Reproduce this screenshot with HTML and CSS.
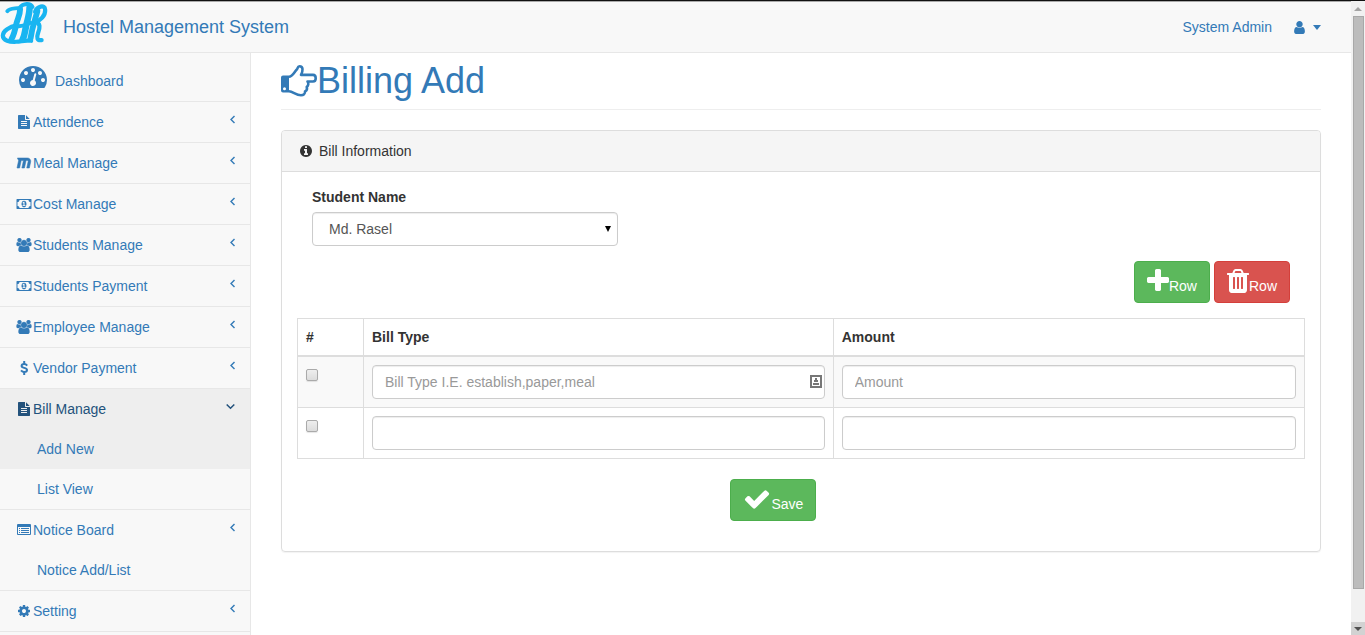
FILE: index.html
```html
<!DOCTYPE html>
<html lang="en">
<head>
<meta charset="utf-8">
<meta name="viewport" content="width=device-width, initial-scale=1">
<title>Hostel Management System</title>
<link rel="stylesheet" href="styles.css">
</head>
<body>
<svg class="sprite" aria-hidden="true">
  <symbol id="i-file" viewBox="0 0 1792 1792"><path d="M1596 476q14 14 28 36h-472v-472q22 14 36 28zm-476 164h544v1056q0 40-28 68t-68 28h-1344q-40 0-68-28t-28-68v-1600q0-40 28-68t68-28h800v544q0 40 28 68t68 28zm160 736v-64q0-14-9-23t-23-9h-704q-14 0-23 9t-9 23v64q0 14 9 23t23 9h704q14 0 23-9t9-23zm0-256v-64q0-14-9-23t-23-9h-704q-14 0-23 9t-9 23v64q0 14 9 23t23 9h704q14 0 23-9t9-23zm0-256v-64q0-14-9-23t-23-9h-704q-14 0-23 9t-9 23v64q0 14 9 23t23 9h704q14 0 23-9t9-23z"/></symbol>
  <symbol id="i-dash" viewBox="0 0 1792 1792"><path d="M384 1152q0-53-37.5-90.5t-90.5-37.5-90.5 37.5-37.5 90.5 37.5 90.5 90.5 37.5 90.5-37.5 37.5-90.5zm192-448q0-53-37.5-90.5t-90.5-37.5-90.5 37.5-37.5 90.5 37.5 90.5 90.5 37.5 90.5-37.5 37.5-90.5zm428 481l101-382q6-26-7.5-48.5t-38.5-29.5-48 6.5-30 39.5l-101 382q-60 5-107 43.5t-63 98.5q-20 77 20 146t117 89 146-20 89-117q16-60-6-117t-72-91zm660-33q0-53-37.5-90.5t-90.5-37.5-90.5 37.5-37.5 90.5 37.5 90.5 90.5 37.5 90.5-37.5 37.5-90.5zm-640-640q0-53-37.5-90.5t-90.5-37.5-90.5 37.5-37.5 90.5 37.5 90.5 90.5 37.5 90.5-37.5 37.5-90.5zm448 192q0-53-37.5-90.5t-90.5-37.5-90.5 37.5-37.5 90.5 37.5 90.5 90.5 37.5 90.5-37.5 37.5-90.5zm320 448q0 261-141 483-19 29-54 29h-1402q-35 0-54-29-141-221-141-483 0-182 71-348t191-286 286-191 348-71 348 71 286 191 191 286 71 348z"/></symbol>
  <symbol id="i-meal" viewBox="0 0 1792 1792"><path stroke="currentColor" stroke-width="70" d="M1745 773l-164 763h-334l178-832q13-56-15-88-27-33-83-33h-169l-204 953h-334l204-953h-286l-204 953h-334l204-953-153-327h1276q101 0 189.5 40.5t147.5 113.5q60 73 81 168.5t0 194.5z"/></symbol>
  <symbol id="i-money" viewBox="0 0 1920 1792"><path d="M768 1152h384v-96h-128v-448h-114l-148 137 77 80q42-37 55-57h2v288h-128v96zm512-256q0 70-21 142t-59.5 134-101.5 101-138 39-138-39-101.5-101-59.5-134-21-142 21-142 59.5-134 101.5-101 138-39 138 39 101.5 101 59.5 134 21 142zm512 256v-512q-106 0-181-75t-75-181h-1152q0 106-75 181t-181 75v512q106 0 181 75t75 181h1152q0-106 75-181t181-75zm128-832v1152q0 26-19 45t-45 19h-1792q-26 0-45-19t-19-45v-1152q0-26 19-45t45-19h1792q26 0 45 19t19 45z"/></symbol>
  <symbol id="i-users" viewBox="0 0 1920 1792"><path stroke="currentColor" stroke-width="40" d="M593 896q-162 5-265 128h-134q-82 0-138-40.5t-56-118.5q0-353 124-353 6 0 43.5 21t97.5 42.5 119 21.5q67 0 133-23-5 37-5 66 0 139 81 256zm1071 637q0 120-73 189.5t-194 69.5h-874q-121 0-194-69.5t-73-189.5q0-53 3.5-103.5t14-109 26.5-108.5 43-97.5 62-81 85.5-53.5 111.5-20q10 0 43 21.5t73 48 107 48 135 21.5 135-21.5 107-48 73-48 43-21.5q61 0 111.5 20t85.5 53.5 62 81 43 97.5 26.5 108.5 14 109 3.5 103.5zm-1024-1277q0 106-75 181t-181 75-181-75-75-181 75-181 181-75 181 75 75 181zm704 384q0 159-112.5 271.5t-271.5 112.5-271.5-112.5-112.5-271.5 112.5-271.5 271.5-112.5 271.5 112.5 112.5 271.5zm576 225q0 78-56 118.5t-138 40.5h-134q-103-123-265-128 81-117 81-256 0-29-5-66 66 23 133 23 59 0 119-21.5t97.5-42.5 43.5-21q124 0 124 353zm-128-609q0 106-75 181t-181 75-181-75-75-181 75-181 181-75 181 75 75 181z"/></symbol>
  <symbol id="i-usd" viewBox="0 0 14 14"><path d="M10.200 4.600C9.400 3.600 8.300 3.100 7.200 3.100 5.600 3.100 4.600 3.900 4.600 5 4.600 7.500 10 6.300 10 9 10 10.200 8.900 10.900 7.400 10.900 6 10.900 4.900 10.300 4 9.300M7.200 0V3.200M7.200 10.900V14" fill="none" stroke="currentColor" stroke-width="2"/></symbol>
  <symbol id="i-list" viewBox="0 0 14 14"><path fill-rule="evenodd" d="M1 1h12a1 1 0 0 1 1 1v9a1 1 0 0 1-1 1H1a1 1 0 0 1-1-1V2a1 1 0 0 1 1-1zM1 4v7h12V4z"/><path d="M2 5h1v1H2zM4 5h8v1H4zM2 7h1v1H2zM4 7h8v1H4zM2 9h1v1H2zM4 9h8v1H4z"/></symbol>
  <symbol id="i-cog" viewBox="0 0 1792 1792"><path d="M1152 896q0-106-75-181t-181-75-181 75-75 181 75 181 181 75 181-75 75-181zm512-109v222q0 12-8 23t-20 13l-185 28q-19 54-39 91 35 50 107 138 10 12 10 25t-9 23q-27 37-99 108t-94 71q-12 0-26-9l-138-108q-44 23-91 38-16 136-29 186-7 28-36 28h-222q-14 0-24.500-8.500t-11.500-21.500l-28-184q-49-16-90-37l-141 107q-10 9-25 9-14 0-25-11-126-114-165-168-7-10-7-23 0-12 8-23 15-21 51-66.500t54-70.500q-27-50-41-99l-183-27q-13-2-21-12.500t-8-23.500v-222q0-12 8-23t19-13l186-28q14-46 39-92-40-57-107-138-10-12-10-24 0-10 9-23 26-36 98.500-107.500t94.500-71.500q13 0 26 10l138 107q44-23 91-38 16-136 29-186 7-28 36-28h222q14 0 24.500 8.500t11.500 21.500l28 184q49 16 90 37l142-107q9-9 24-9 13 0 25 10 129 119 165 170 7 8 7 22 0 12-8 23-15 21-51 66.500t-54 70.500q26 50 41 98l183 28q13 2 21 12.500t8 23.500z"/></symbol>
  <symbol id="i-left" viewBox="0 0 5 14"><path d="M4.500 3.900 1 7.500l3.500 3.600" fill="none" stroke="currentColor" stroke-width="1.400"/></symbol>
  <symbol id="i-down" viewBox="0 0 9 14"><path d="M.7 5.500l3.800 3.800 3.800-3.800" fill="none" stroke="currentColor" stroke-width="1.500"/></symbol>
  <symbol id="i-user" viewBox="192 0 1408 1792"><path d="M1536 1399q0 109-62.500 187t-150.500 78h-854q-88 0-150.500-78t-62.500-187q0-85 8.500-160.500t31.500-152 58.500-131 94-89 134.500-34.500q131 128 313 128t313-128q76 0 134.500 34.500t94 89 58.500 131 31.500 152 8.500 160.500zm-256-887q0 159-112.500 271.500t-271.500 112.500-271.500-112.500-112.500-271.500 112.500-271.500 271.500-112.500 271.500 112.500 112.500 271.500z"/></symbol>
  <symbol id="i-info" viewBox="128 0 1536 1792"><path d="M1152 1376v-160q0-14-9-23t-23-9h-96v-512q0-14-9-23t-23-9h-320q-14 0-23 9t-9 23v160q0 14 9 23t23 9h96v320h-96q-14 0-23 9t-9 23v160q0 14 9 23t23 9h448q14 0 23-9t9-23zm-128-896v-160q0-14-9-23t-23-9h-192q-14 0-23 9t-9 23v160q0 14 9 23t23 9h192q14 0 23-9t9-23zm640 416q0 209-103 385.500t-279.500 279.500-385.500 103-385.500-103-279.500-279.500-103-385.500 103-385.500 279.500-279.500 385.500-103 385.500 103 279.500 279.500 103 385.500z"/></symbol>
  <symbol id="i-plus" viewBox="192 64 1408 1792"><path d="M1600 736v192q0 40-28 68t-68 28h-416v416q0 40-28 68t-68 28h-192q-40 0-68-28t-28-68v-416h-416q-40 0-68-28t-28-68v-192q0-40 28-68t68-28h416v-416q0-40 28-68t68-28h192q40 0 68 28t28 68v416h416q40 0 68 28t28 68z"/></symbol>
  <symbol id="i-trash" viewBox="192 64 1408 1792"><path d="M704 1376v-704q0-14-9-23t-23-9h-64q-14 0-23 9t-9 23v704q0 14 9 23t23 9h64q14 0 23-9t9-23zm256 0v-704q0-14-9-23t-23-9h-64q-14 0-23 9t-9 23v704q0 14 9 23t23 9h64q14 0 23-9t9-23zm256 0v-704q0-14-9-23t-23-9h-64q-14 0-23 9t-9 23v704q0 14 9 23t23 9h64q14 0 23-9t9-23zm-544-992h448l-48-117q-7-9-17-11h-317q-10 2-17 11zm928 32v64q0 14-9 23t-23 9h-96v948q0 83-47 143.500t-113 60.500h-832q-66 0-113-58.500t-47-141.500v-952h-96q-14 0-23-9t-9-23v-64q0-14 9-23t23-9h309l70-167q15-37 54-63t79-26h320q40 0 79 26t54 63l70 167h309q14 0 23 9t9 23z"/></symbol>
  <symbol id="i-check" viewBox="0 64 1792 1792"><path d="M1671 566q0 40-28 68l-724 724-136 136q-28 28-68 28t-68-28l-136-136-362-362q-28-28-28-68t28-68l136-136q28-28 68-28t68 28l294 295 656-657q28-28 68-28t68 28l136 136q28 28 28 68z"/></symbol>
</svg>

<div class="window">
  <div class="page">
    <header class="topbar">
      <a class="brand" href="#">
        <svg class="logo" viewBox="0 0 144 132" aria-hidden="true"><g fill="none" stroke="#19b5f1" stroke-linecap="round" stroke-linejoin="round">
          <path stroke-width="12" d="M21 28C28 18 42 21 58 18C70 3 92 3 98 15"/>
          <path stroke-width="18" d="M60 22C60 40 53 50 49 65C45 85 42 100 34 113"/>
          <path stroke-width="13" d="M50 72C28 76 7 88 7 103C7 119 28 123 48 122C66 121 72 116 94 119"/>
          <path stroke-width="20" d="M89 18C89 40 82 55 78 76C74 94 74 104 68 114"/>
          <path stroke-width="12" d="M50 74C64 76 76 72 92 64"/>
          <path stroke-width="18" d="M113 28C108 50 98 70 92 112"/>
          <path stroke-width="13" d="M106 30C112 14 136 6 137 24C138 42 122 58 106 62C124 64 121 80 115 96C110 110 112 119 126 117"/>
        </g></svg>
        <span>Hostel Management System</span>
      </a>
      <nav class="account" aria-label="Account">
        <a href="#">System Admin</a>
        <a class="account-menu" href="#" aria-label="Account menu"><svg class="user-icon"><use href="#i-user"/></svg><span class="caret"></span></a>
      </nav>
    </header>

    <div class="columns">
      <nav class="sidebar" aria-label="Main">
        <ul class="menu">
          <li><a class="item item-dash" href="#"><svg class="icon-dash"><use href="#i-dash"/></svg><span>Dashboard</span></a></li>
          <li><a class="item" href="#"><svg class="icon"><use href="#i-file"/></svg><span class="name">Attendence</span><svg class="left"><use href="#i-left"/></svg></a></li>
          <li><a class="item" href="#"><svg class="icon"><use href="#i-meal"/></svg><span class="name">Meal Manage</span><svg class="left"><use href="#i-left"/></svg></a></li>
          <li><a class="item" href="#"><svg class="icon"><use href="#i-money"/></svg><span class="name">Cost Manage</span><svg class="left"><use href="#i-left"/></svg></a></li>
          <li><a class="item" href="#"><svg class="icon"><use href="#i-users"/></svg><span class="name">Students Manage</span><svg class="left"><use href="#i-left"/></svg></a></li>
          <li><a class="item" href="#"><svg class="icon"><use href="#i-money"/></svg><span class="name">Students Payment</span><svg class="left"><use href="#i-left"/></svg></a></li>
          <li><a class="item" href="#"><svg class="icon"><use href="#i-users"/></svg><span class="name">Employee Manage</span><svg class="left"><use href="#i-left"/></svg></a></li>
          <li><a class="item" href="#"><svg class="icon"><use href="#i-usd"/></svg><span class="name">Vendor Payment</span><svg class="left"><use href="#i-left"/></svg></a></li>
          <li>
            <a class="item open" href="#"><svg class="icon"><use href="#i-file"/></svg><span class="name">Bill Manage</span><svg class="down"><use href="#i-down"/></svg></a>
            <ul class="submenu">
              <li><a class="active" href="#">Add New</a></li>
              <li><a href="#">List View</a></li>
            </ul>
          </li>
          <li>
            <a class="item" href="#"><svg class="icon"><use href="#i-list"/></svg><span class="name">Notice Board</span><svg class="left"><use href="#i-left"/></svg></a>
            <ul class="submenu">
              <li><a href="#">Notice Add/List</a></li>
            </ul>
          </li>
          <li><a class="item" href="#"><svg class="icon"><use href="#i-cog"/></svg><span class="name">Setting</span><svg class="left"><use href="#i-left"/></svg></a></li>
        </ul>
      </nav>

      <main class="content">
        <h1 class="title">
          <svg class="hand" viewBox="0 0 36 36" aria-hidden="true"><path fill="currentColor" fill-rule="evenodd" d="M2 12.500h6v17H2a2 2 0 0 1-2-2v-13a2 2 0 0 1 2-2zM3.500 24.200a1.500 1.500 0 1 0 0 3 1.500 1.500 0 0 0 0-3z"/><path fill="none" stroke="currentColor" stroke-width="2.600" stroke-linejoin="round" d="M8 13.700C11.500 13.700 13.500 8.500 16 6.200C16.800 5.300 16.500 3.300 18.500 3.300C22.500 3.300 22 8 20 11.900H32C35.600 11.900 35.600 18.500 32 18.500H26.500C28 20.500 27.300 23 25.700 23.800C26.500 26 25.500 27.800 24 28.500C24.300 31 22.500 32.200 20 32.200C15 32.200 12 28.500 8 28.300"/></svg>Billing Add
        </h1>

        <section class="panel">
          <h2 class="panel-head"><svg class="info-icon"><use href="#i-info"/></svg>Bill Information</h2>
          <form class="panel-body">
            <div class="field">
              <label for="student">Student Name</label>
              <div class="select-wrap">
                <select id="student" class="control select"><option>Md. Rasel</option></select>
              </div>
            </div>
            <div class="row-actions">
              <button class="btn btn-green" type="button"><svg class="btn-icon"><use href="#i-plus"/></svg>Row</button>
              <button class="btn btn-red" type="button"><svg class="btn-icon"><use href="#i-trash"/></svg>Row</button>
            </div>
            <table class="bills">
              <thead>
                <tr><th class="pick" scope="col">#</th><th scope="col">Bill Type</th><th class="amount" scope="col">Amount</th></tr>
              </thead>
              <tbody>
                <tr>
                  <td><input class="check" type="checkbox" aria-label="Select row 1"></td>
                  <td><div class="input-wrap"><input class="control" type="text" placeholder="Bill Type I.E. establish,paper,meal" aria-label="Bill type, row 1"><svg class="autofill" viewBox="0 0 12 14" aria-hidden="true"><path fill="none" stroke="#777" stroke-width="2" d="M1 1h10v11H1z"/><path fill="#777" d="M5 3h2v2h1v2H4V5h1zM3 8h6v2H3z"/></svg></div></td>
                  <td><input class="control" type="text" placeholder="Amount" aria-label="Amount, row 1"></td>
                </tr>
                <tr>
                  <td><input class="check" type="checkbox" aria-label="Select row 2"></td>
                  <td><input class="control" type="text" aria-label="Bill type, row 2"></td>
                  <td><input class="control" type="text" aria-label="Amount, row 2"></td>
                </tr>
              </tbody>
            </table>
            <div class="save">
              <button class="btn btn-green" type="button"><svg class="btn-icon btn-icon-wide"><use href="#i-check"/></svg>Save</button>
            </div>
          </form>
        </section>
      </main>
    </div>
  </div>

  <div class="scrollbar" aria-hidden="true">
    <div class="scroll-up"></div>
    <div class="scroll-track"><div class="scroll-thumb"></div></div>
    <div class="scroll-down"></div>
  </div>
</div>
</body>
</html>
```
FILE: styles.css
```css
* { box-sizing: border-box; }

body {
  margin: 0;
  font-family: "Liberation Sans", Arial, sans-serif;
  font-size: 14px;
  line-height: 20px;
  color: #333;
  background: #fff;
}

a { color: #337ab7; text-decoration: none; }
ul { list-style: none; margin: 0; padding: 0; }
svg { display: block; flex: none; fill: currentColor; }
button, input, select { font: inherit; }

.sprite { display: none; }

.window {
  display: flex;
  height: 100vh;
  overflow: hidden;
  border-top: 1px solid #111;
  box-shadow: inset 0 1px 0 #aaa;
}

.page {
  flex: 1;
  min-width: 0;
  display: flex;
  flex-direction: column;
  padding-top: 1px;
}

/* Top bar */
.topbar {
  display: flex;
  justify-content: space-between;
  min-height: 51px;
  padding-right: 30px;
  background: #f8f8f8;
  border-bottom: 1px solid #e7e7e7;
}

.brand {
  display: flex;
  align-items: flex-start;
  gap: 15px;
  font-size: 18px;
}

.brand span { padding: 15px 0; }
.logo { width: 48px; height: 43px; }

.account {
  display: flex;
  align-items: center;
  gap: 21px;
}

.account-menu {
  display: flex;
  align-items: center;
  gap: 7px;
}

.user-icon { width: 13px; height: 15px; }

.caret {
  border: 4px solid transparent;
  border-top: 5px solid currentColor;
  border-bottom: 0;
}

/* Sidebar */
.columns { display: flex; flex: 1; min-height: 0; }

.sidebar {
  flex: none;
  width: 251px;
  overflow: hidden;
  background: #f8f8f8;
  border-right: 1px solid #e7e7e7;
}

.menu > li { border-bottom: 1px solid #e7e7e7; }

.item {
  display: flex;
  align-items: flex-start;
  padding: 10px 15px;
}

.item-dash { gap: 4px; padding-top: 9px; }
.item-dash span { padding-top: 9px; }
.icon-dash { width: 36px; height: 28px; }
.icon { width: 18px; height: 14px; margin-top: 3px; }
.name { flex: 1; }
.left { width: 5px; height: 14px; }
.down { width: 9px; height: 14px; }
.open { color: #23527c; }
.open, .submenu .active { background: #eee; }
.submenu a { display: block; padding: 10px 15px 10px 37px; }

/* Content */
.content { flex: 1; min-width: 0; padding: 0 30px; }

.title {
  display: flex;
  align-items: center;
  margin: 8px 0 20px;
  padding-bottom: 8px;
  border-bottom: 1px solid #eee;
  font-size: 36px;
  font-weight: 400;
  line-height: 40px;
  color: #337ab7;
}

.hand { width: 36px; height: 36px; }

.panel {
  border: 1px solid #ddd;
  border-radius: 4px;
  box-shadow: 0 1px 1px rgba(0, 0, 0, .05);
}

.panel-head {
  display: flex;
  align-items: center;
  gap: 7px;
  margin: 0;
  padding: 10px 18px;
  font-size: 14px;
  font-weight: 400;
  background: #f5f5f5;
  border-bottom: 1px solid #ddd;
  border-radius: 3px 3px 0 0;
}

.info-icon { width: 12px; height: 14px; }
.panel-body { padding: 15px 15px 30px; }
.field { width: 33.333%; padding: 0 15px; }
.field label { display: block; margin-bottom: 5px; font-weight: 700; }
.select-wrap, .input-wrap { position: relative; }

.select-wrap::after {
  content: "";
  position: absolute;
  top: 14px;
  right: 7px;
  border: 3px solid transparent;
  border-top: 6px solid #000;
  border-bottom: 0;
  pointer-events: none;
}

.control {
  display: block;
  width: 100%;
  height: 34px;
  padding: 6px 12px;
  color: #555;
  background: #fff;
  border: 1px solid #ccc;
  border-radius: 4px;
  box-shadow: inset 0 1px 1px rgba(0, 0, 0, .075);
}

.control::placeholder { color: #999; opacity: 1; }
.select { appearance: none; padding-left: 16px; }

.autofill {
  position: absolute;
  top: 10px;
  right: 3px;
  width: 12px;
  height: 14px;
}

.row-actions {
  display: flex;
  justify-content: flex-end;
  gap: 4px;
  padding: 15px;
}

.btn {
  display: flex;
  align-items: flex-end;
  padding: 6px 12px;
  color: #fff;
  border: 1px solid;
  border-radius: 4px;
}

.btn-green { background: #5cb85c; border-color: #4cae4c; }
.btn-red { background: #d9534f; border-color: #d43f3a; }
.btn-icon { width: 22px; height: 28px; }
.btn-icon-wide { width: 28px; }

.bills {
  width: 100%;
  table-layout: fixed;
  border-collapse: collapse;
}

.bills th, .bills td {
  padding: 8px;
  border: 1px solid #ddd;
  text-align: left;
  vertical-align: top;
}

.bills th { border-bottom-width: 2px; }
.bills .pick { width: 66px; }
.bills .amount { width: 46.8%; }
.bills tbody tr:nth-child(odd) { background: #f9f9f9; }

.check {
  appearance: none;
  display: block;
  width: 12px;
  height: 12px;
  margin: 4px 0 0;
  border: 1px solid #aaa;
  border-radius: 2px;
  background: linear-gradient(#eee, #dcdcdc);
  box-shadow: 0 1px 1px rgba(0, 0, 0, .1);
}

.check:checked { background: #337ab7; }
.save { display: flex; padding: 20px 0 0 43%; }

/* Scrollbar */
.scrollbar {
  flex: none;
  display: flex;
  flex-direction: column;
  width: 14px;
  padding-top: 1px;
  background: #f1f1f1;
}

.scroll-up, .scroll-down {
  display: flex;
  align-items: center;
  justify-content: center;
  height: 14px;
}

.scroll-up::before, .scroll-down::before {
  content: "";
  border: 4px solid transparent;
}

.scroll-up::before { border-bottom-color: #a3a3a3; border-top: 0; }
.scroll-down { height: 13px; background: #d2d2d2; }
.scroll-down::before { border-top-color: #505050; border-bottom: 0; }
.scroll-track { flex: 1; padding: 0 1px 0 2px; }

.scroll-thumb {
  height: 94.5%;
  background: #bcbcbc;
  border: 1px solid #a8a8a8;
}
```
